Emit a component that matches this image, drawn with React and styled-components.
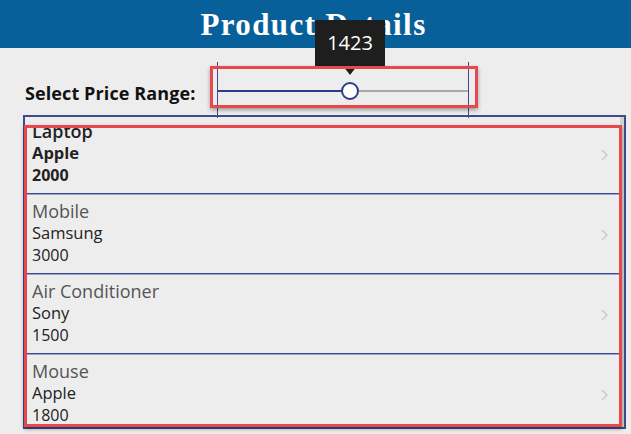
import React from "react";
import styled, { createGlobalStyle } from "styled-components";

const GlobalStyle = createGlobalStyle`
  html, body { margin: 0; padding: 0; }
  body {
    background: #ededed;
    font-family: "Open Sans", "Noto Sans", sans-serif;
    width: 631px;
    height: 434px;
    overflow: hidden;
  }
  * { box-sizing: border-box; }
`;

const Page = styled.div`
  width: 631px;
  height: 434px;
  background: #ededed;
  display: flex;
  flex-direction: column;
`;

const Header = styled.header`
  height: 48px;
  flex: none;
  background: #07609a;
  display: flex;
  align-items: center;
  justify-content: center;
`;

const Title = styled.h1`
  margin: 0;
  color: #ffffff;
  font-family: "Liberation Serif", "DejaVu Serif", serif;
  font-weight: 700;
  font-size: 31px;
  line-height: 1;
  letter-spacing: 1.4px;
  transform: translate(-2px, 0px);
`;

const Controls = styled.div`
  height: 67px;
  flex: none;
  display: flex;
  align-items: flex-start;
  padding: 14px 0 0 25px;
  position: relative;
  z-index: 2;
`;

const Label = styled.span`
  width: 192px;
  margin-top: 20px;
  font-weight: 700;
  font-size: 18px;
  line-height: 22px;
  color: #111111;
  letter-spacing: 0.1px;
  white-space: nowrap;
`;

const SliderControl = styled.div`
  position: relative;
  width: 252px;
  height: 56px;
  border-left: 1px solid #3e4b8c;
  border-right: 1px solid #3e4b8c;
`;

const Track = styled.div`
  position: absolute;
  left: 0;
  right: 0;
  top: 28px;
  height: 2px;
  background: #a9a9a9;
`;

const Fill = styled.div`
  position: absolute;
  left: 0;
  top: 0;
  height: 2px;
  background: #2b3d86;
`;

const Thumb = styled.div`
  position: absolute;
  top: 29px;
  width: 18px;
  height: 18px;
  margin: -9px 0 0 -9px;
  border-radius: 50%;
  background: #ffffff;
  border: 2px solid #2b3d86;
`;

const Tooltip = styled.div`
  position: absolute;
  top: -42px;
  width: 70px;
  height: 46px;
  margin-left: -35px;
  background: #1e1e1e;
  color: #ffffff;
  font-size: 20px;
  line-height: 46px;
  text-align: center;
  &::after {
    content: "";
    position: absolute;
    left: 50%;
    top: 100%;
    margin-left: -7px;
    border-left: 7px solid transparent;
    border-right: 7px solid transparent;
    border-top: 9px solid #1e1e1e;
  }
`;

const Highlight = styled.div`
  position: absolute;
  left: ${(p) => p.$left}px;
  top: ${(p) => p.$top}px;
  width: ${(p) => p.$width}px;
  height: ${(p) => p.$height}px;
  border: 3px solid #e6484e;
  box-shadow: 0 2px 4px rgba(0, 0, 0, 0.35);
  pointer-events: none;
  z-index: 3;
`;

const Gallery = styled.div`
  position: relative;
  margin-left: 23px;
  width: 603px;
  height: 314px;
  border: 2px solid #3e4b8c;
  display: flex;
  overflow: visible;
`;

const Viewport = styled.div`
  flex: 1;
  overflow: hidden;
`;

const List = styled.div`
  margin-top: -3px;
`;

const Row = styled.div`
  position: relative;
  height: 80px;
  border-top: 1px solid #9ca2c8;
  border-bottom: 1px solid #3e4b8c;
  padding: 5px 0 0 7px;
  color: #222222;
`;

const RowTitle = styled.div`
  font-size: 18px;
  line-height: 22px;
  color: ${(p) => (p.$selected ? "#222222" : "#555555")};
  font-weight: ${(p) => (p.$selected ? 600 : 400)};
`;

const RowSub = styled.div`
  font-size: 16.5px;
  line-height: 22px;
  font-weight: ${(p) => (p.$selected ? 700 : 400)};
`;

const RowBody = styled.div`
  font-size: 16px;
  line-height: 22px;
  font-weight: ${(p) => (p.$selected ? 700 : 400)};
`;

const Chevron = styled.svg`
  position: absolute;
  right: 12px;
  top: 34px;
  width: 7px;
  height: 12px;
`;

const Scrollbar = styled.div`
  width: 4px;
  flex: none;
  background: #d2d2d2;
`;

const items = [
  { name: "Laptop", brand: "Apple", price: 2000, selected: true },
  { name: "Mobile", brand: "Samsung", price: 3000 },
  { name: "Air Conditioner", brand: "Sony", price: 1500 },
  { name: "Mouse", brand: "Apple", price: 1800 },
];

const value = 1423;
const thumbX = 132;

export default function App() {
  return (
    <>
      <GlobalStyle />
      <Page>
        <Header>
          <Title>Product Details</Title>
        </Header>
        <Controls>
          <Label>Select Price Range:</Label>
          <SliderControl>
            <Track>
              <Fill style={{ width: thumbX }} />
            </Track>
            <Thumb style={{ left: thumbX }} />
            <Tooltip style={{ left: thumbX }}>{value}</Tooltip>
            <Highlight $left={-8} $top={4} $width={268} $height={42} />
          </SliderControl>
        </Controls>
        <Gallery>
          <Viewport>
            <List>
              {items.map((it) => (
                <Row key={it.name}>
                  <RowTitle $selected={it.selected}>{it.name}</RowTitle>
                  <RowSub $selected={it.selected}>{it.brand}</RowSub>
                  <RowBody $selected={it.selected}>{it.price}</RowBody>
                  <Chevron viewBox="0 0 7 12">
                    <polyline
                      points="1,1 6,6 1,11"
                      fill="none"
                      stroke="#c4c4c4"
                      strokeWidth="1.2"
                    />
                  </Chevron>
                </Row>
              ))}
            </List>
          </Viewport>
          <Scrollbar />
          <Highlight $left={-1} $top={8} $width={598} $height={302} />
        </Gallery>
      </Page>
    </>
  );
}
